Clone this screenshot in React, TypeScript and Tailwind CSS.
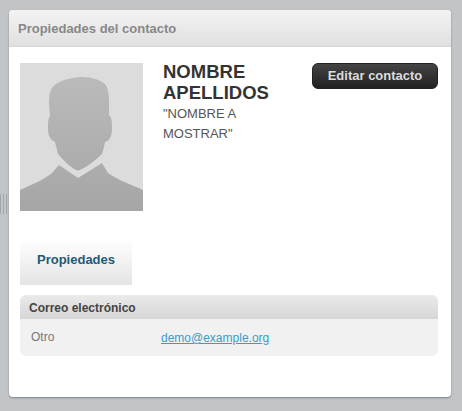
import React from "react";

const Silhouette = () => (
  <svg viewBox="0 0 123 148" className="block w-[123px] h-[148px]">
    <defs>
      <linearGradient id="sil" x1="0" y1="14" x2="0" y2="148" gradientUnits="userSpaceOnUse">
        <stop offset="0" stopColor="#bababa" />
        <stop offset="1" stopColor="#a6a6a6" />
      </linearGradient>
    </defs>
    <rect width="123" height="148" fill="#dcdcdc" />
    <path
      d="M29 40 C29 30 31 24 36 21 C44 16 54 14 63 14 C72 14 80 17 85 21 C88 25 89 31 89 38 L89 52 C92 54 92 60 92 66 C92 72 90 78 85 79 C84 84 83 88 82 91 C76 97 68 103 60 107 C58 108 56 107 54 106 C48 102 43 97 38 91 C37 87 36 83 35 79 C30 77 28 72 28 66 C28 60 28 55 30 53 Z"
      fill="url(#sil)"
    />
    <path
      d="M39 102 L58 115 L82 100 L88 110 C98 117 112 122 123 127 L123 148 L0 148 L0 127 C8 123 24 117 32 110 Z"
      fill="url(#sil)"
    />
  </svg>
);

export default function App() {
  return (
    <div
      className="relative w-[462px] h-[411px] overflow-hidden bg-[#c1c5c8]"
      style={{ fontFamily: '"Liberation Sans", Arial, sans-serif' }}
    >
      <div className="absolute left-0 top-[194px] flex gap-[2px]">
        <div className="w-px h-[20px] bg-[#a3a7aa]" />
        <div className="w-px h-[20px] bg-[#a3a7aa]" />
        <div className="w-px h-[20px] bg-[#a3a7aa]" />
      </div>
      <div className="pt-[10px] pl-[9px]">
        <div className="w-[442px] h-[387px] bg-white rounded-[4px] shadow-[0_1px_2px_rgba(0,0,0,0.35)] overflow-hidden">
          <div className="h-[37px] flex items-center pl-[9px] bg-gradient-to-b from-[#f3f3f3] to-[#e0e0e0] border-b border-[#d4d4d4]">
            <span className="text-[13px] font-bold text-[#888888] mt-[1px]">Propiedades del contacto</span>
          </div>

          <div className="flex pl-[11px] pt-[16px] h-[152px]">
            <Silhouette />
            <div className="w-[140px] ml-[20px] mr-[9px]">
              <h1 className="text-[18.5px] leading-[21px] font-bold text-[#333333] mt-[-2px]">NOMBRE APELLIDOS</h1>
              <p className="text-[13px] leading-[20px] text-[#555555] mt-[1px]">"NOMBRE A MOSTRAR"</p>
            </div>
            <button className="w-[126px] h-[26px] rounded-[6px] bg-gradient-to-b from-[#444444] to-[#222222] border border-[#222222] text-[13px] font-bold text-[#dddddd]">
              Editar contacto
            </button>
          </div>

          <div className="ml-[11px] mt-[40px] w-[112px] h-[46px] pt-[12px] bg-gradient-to-b from-white to-[#e4e4e4] text-center text-[13px] leading-[18px] font-bold text-[#1f5a76]">
            Propiedades
          </div>

          <div className="ml-[11px] mt-[10px] w-[418px] rounded-[6px] overflow-hidden bg-[#f1f1f1]">
            <div className="h-[24px] flex items-center pl-[9px] pt-[1px] bg-gradient-to-b from-[#eaeaea] to-[#d6d6d6] text-[12px] font-bold text-[#444444]">
              Correo electrónico
            </div>
            <div className="h-[37px] flex pl-[11px] pt-[10px] text-[12px] leading-[16px]">
              <span className="w-[130px] text-[#777777]">Otro</span>
              <a href="#" className="text-[#3f9bc4] underline mt-[1px]">demo@example.org</a>
            </div>
          </div>
        </div>
      </div>
    </div>
  );
}
